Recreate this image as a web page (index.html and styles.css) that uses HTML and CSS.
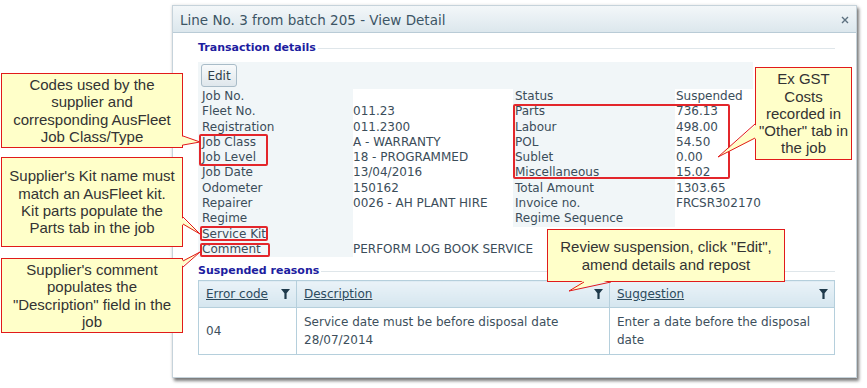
FILE: index.html
```html
<!DOCTYPE html>
<html lang="en">
<head>
    <meta charset="UTF-8" />
    <title>Line No. 3 from batch 205 - View Detail</title>
    <link rel="stylesheet" href="styles.css">
</head>
<body>
<div class="page">
    <div class="dialog">
        <div class="titlebar">
            <span class="title">Line No. 3 from batch 205 - View Detail</span>
            <svg class="close" width="8" height="8" viewBox="0 0 8 8"><path d="M1 1L7 7M7 1L1 7" stroke="#5d7180" stroke-width="1.4"/></svg>
        </div>
        <div class="dialog-body">
            <div class="legend legend-top"><span>Transaction details</span></div>
            <div class="details">
                <div class="edit-row"><button class="btn">Edit</button></div>

                <div class="lbl">Job No.</div><div class="val"></div><div class="lbl right">Status</div><div class="val right">Suspended</div>
                <div class="lbl">Fleet No.</div><div class="val">011.23</div><div class="lbl right">Parts</div><div class="val right">736.13</div>
                <div class="lbl">Registration</div><div class="val">011.2300</div><div class="lbl right">Labour</div><div class="val right">498.00</div>
                <div class="lbl">Job Class</div><div class="val">A - WARRANTY</div><div class="lbl right">POL</div><div class="val right">54.50</div>
                <div class="lbl">Job Level</div><div class="val">18 - PROGRAMMED</div><div class="lbl right">Sublet</div><div class="val right">0.00</div>
                <div class="lbl">Job Date</div><div class="val">13/04/2016</div><div class="lbl right">Miscellaneous</div><div class="val right">15.02</div>
                <div class="lbl">Odometer</div><div class="val">150162</div><div class="lbl right">Total Amount</div><div class="val right">1303.65</div>
                <div class="lbl">Repairer</div><div class="val">0026 - AH PLANT HIRE</div><div class="lbl right">Invoice no.</div><div class="val right">FRCSR302170</div>
                <div class="lbl">Regime</div><div class="val"></div><div class="lbl right">Regime Sequence</div><div class="val right"></div>
                <div class="lbl">Service Kit</div><div class="val"></div><div class="empty"></div><div class="empty"></div>
                <div class="lbl">Comment</div><div class="val">PERFORM LOG BOOK SERVICE</div><div class="empty"></div><div class="empty"></div>
            </div>

            <div class="legend legend-bottom"><span>Suspended reasons</span></div>
            <table class="reasons">
                <colgroup><col class="c1"><col class="c2"><col class="c3"></colgroup>
                <thead>
                    <tr>
                        <th><div class="th-inner"><span class="th-link">Error code</span><svg class="funnel" width="9" height="10" viewBox="0 0 9 10"><path d="M0 0H9L5.6 4.2V10H3.4V4.2Z"/></svg></div></th>
                        <th><div class="th-inner"><span class="th-link">Description</span><svg class="funnel" width="9" height="10" viewBox="0 0 9 10"><path d="M0 0H9L5.6 4.2V10H3.4V4.2Z"/></svg></div></th>
                        <th><div class="th-inner"><span class="th-link">Suggestion</span><svg class="funnel" width="9" height="10" viewBox="0 0 9 10"><path d="M0 0H9L5.6 4.2V10H3.4V4.2Z"/></svg></div></th>
                    </tr>
                </thead>
                <tbody>
                    <tr>
                        <td>04</td>
                        <td>Service date must be before disposal date 28/07/2014</td>
                        <td>Enter a date before the disposal date</td>
                    </tr>
                </tbody>
            </table>
        </div>
    </div>

    <!-- red highlight boxes -->
    <div class="mark mark-class"></div>
    <div class="mark mark-kit"></div>
    <div class="mark mark-comment"></div>
    <div class="mark mark-costs"></div>

    <!-- callouts -->
    <div class="callout call-codes">Codes used by the<br>supplier and<br>corresponding AusFleet<br>Job Class/Type</div>
    <div class="callout call-kit">Supplier's Kit name must<br>match an AusFleet kit.<br>Kit parts populate the<br>Parts tab in the job</div>
    <div class="callout call-comment">Supplier's comment<br>populates the<br>"Description" field in the<br>job</div>
    <div class="callout call-costs">Ex GST<br>Costs<br>recorded in<br>"Other" tab in<br>the job</div>
    <div class="callout call-review">Review suspension, click "Edit",<br>amend details and repost</div>

    <svg class="tails" width="867" height="388" viewBox="0 0 867 388">
        <g class="tail-fill">
            <polygon points="181,136 200,142 181,145"/>
            <polygon points="181,217 200,234 181,224"/>
            <polygon points="181,261 200,252 181,267"/>
            <polygon points="757,124 718,157 757,138"/>
            <polygon points="584,280 569,291 611,280"/>
        </g>
        <g class="tail-line">
            <polyline points="183,136 200,142 183,145"/>
            <polyline points="183,217 200,234 183,224"/>
            <polyline points="183,261 200,252 183,267"/>
            <polyline points="755,124 718,157 755,138"/>
            <polyline points="584,282 569,291 611,282"/>
        </g>
    </svg>
</div>
</body>
</html>
```

FILE: styles.css
```css
body {
    margin: 0;
    font-family: "DejaVu Sans", Verdana, sans-serif;
    font-size: 12px;
    color: #3b4d5a;
    background: #ffffff;
}
.page {
    position: relative;
    width: 867px;
    height: 388px;
    padding-top: 5px;
    box-sizing: border-box;
    overflow: hidden;
}
.dialog {
    margin-left: 172px;
    width: 685px;
    height: 373px;
    box-sizing: border-box;
    border: 1px solid #c6d3db;
    background: #ffffff;
    box-shadow: 2px 3px 3px rgba(0, 0, 0, 0.5), 0 0 3px rgba(0, 0, 0, 0.12);
}
.titlebar {
    height: 25px;
    display: flex;
    align-items: center;
    justify-content: space-between;
    padding: 1px 7px 0;
    background: linear-gradient(#f3f7f9, #dce7ed);
    border-bottom: 1px solid #b9cbd6;
    font-size: 13.5px;
    color: #3c5565;
}
.dialog-body {
    padding: 0 21px 0 25px;
}
.legend {
    display: flex;
    align-items: center;
    gap: 2px;
    font-size: 11px;
    font-weight: bold;
    line-height: 16px;
    color: #1d1da0;
}
.legend::after {
    content: "";
    flex: 1;
    border-top: 1px solid #dfe6ea;
}
.legend-top {
    padding-top: 7px;
    margin-bottom: 6px;
}
.legend-bottom {
    margin-top: 6px;
    margin-bottom: 1px;
}
.details {
    display: grid;
    grid-template-columns: 155px 160px 162px 78px;
    grid-template-rows: 27px;
    grid-auto-rows: 15.3px;
    line-height: 15.3px;
    white-space: nowrap;
}
.edit-row {
    grid-column: 1 / -1;
    background: #f1f6f8;
    padding: 2px 3px 0;
}
.btn {
    width: 36px;
    height: 23px;
    padding: 0;
    font-family: "DejaVu Sans", Verdana, sans-serif;
    font-size: 12px;
    color: #2f3f4a;
    border: 1px solid #a9bcc8;
    border-radius: 3px;
    background: linear-gradient(#f8fafb, #dfe7ec);
}
.lbl {
    background: #f1f6f8;
    padding-left: 4px;
}
.lbl.right {
    padding-left: 2px;
}
.val.right {
    padding-left: 1px;
}
.reasons {
    width: 636px;
    border-collapse: collapse;
    table-layout: fixed;
    border: 1px solid #b5cfdc;
}
.c1 { width: 98px; }
.c2 { width: 313px; }
.c3 { width: 225px; }
.reasons th {
    height: 26px;
    padding: 0 6px 0 7px;
    border: 1px solid #b5cfdc;
    background: linear-gradient(#eaf3f8, #d5e6ef);
    font-weight: normal;
    text-align: left;
    color: #2c4a5d;
}
.th-inner {
    display: flex;
    align-items: center;
    justify-content: space-between;
}
.th-link {
    text-decoration: underline;
}
.funnel {
    fill: #1f3a4b;
}
.reasons td {
    padding: 5px 7px 5px;
    border: 1px solid #b5cfdc;
    line-height: 18px;
    color: #3d4f5c;
    vertical-align: middle;
}
.mark {
    position: absolute;
    box-sizing: border-box;
    border: 2px solid #e3262b;
    border-radius: 2px;
}
.mark-class { left: 199px; top: 134px; width: 69px; height: 32px; }
.mark-kit { left: 200px; top: 226px; width: 68px; height: 15px; }
.mark-comment { left: 200px; top: 243px; width: 70px; height: 14px; }
.mark-costs { left: 513px; top: 104px; width: 217px; height: 75px; }
.callout {
    position: absolute;
    box-sizing: border-box;
    display: flex;
    align-items: center;
    justify-content: center;
    text-align: center;
    border: 1px solid #e11a1a;
    background: #ffffc9;
    font-family: "Liberation Sans", Arial, sans-serif;
    font-size: 15px;
    line-height: 17.3px;
    color: #333333;
    white-space: nowrap;
}
.call-codes { left: 1px; top: 73px; width: 182px; height: 75px; }
.call-kit { left: 1px; top: 157px; width: 182px; height: 90px; }
.call-comment { left: 1px; top: 258px; width: 182px; height: 75px; }
.call-costs { left: 755px; top: 67px; width: 97px; height: 93px; }
.call-review { left: 547px; top: 229px; width: 238px; height: 53px; }
.tails {
    position: absolute;
    left: 0;
    top: 0;
    pointer-events: none;
}
.tail-fill polygon {
    fill: #ffffc9;
}
.tail-line polyline {
    fill: none;
    stroke: #e11a1a;
    stroke-width: 1;
}
```
